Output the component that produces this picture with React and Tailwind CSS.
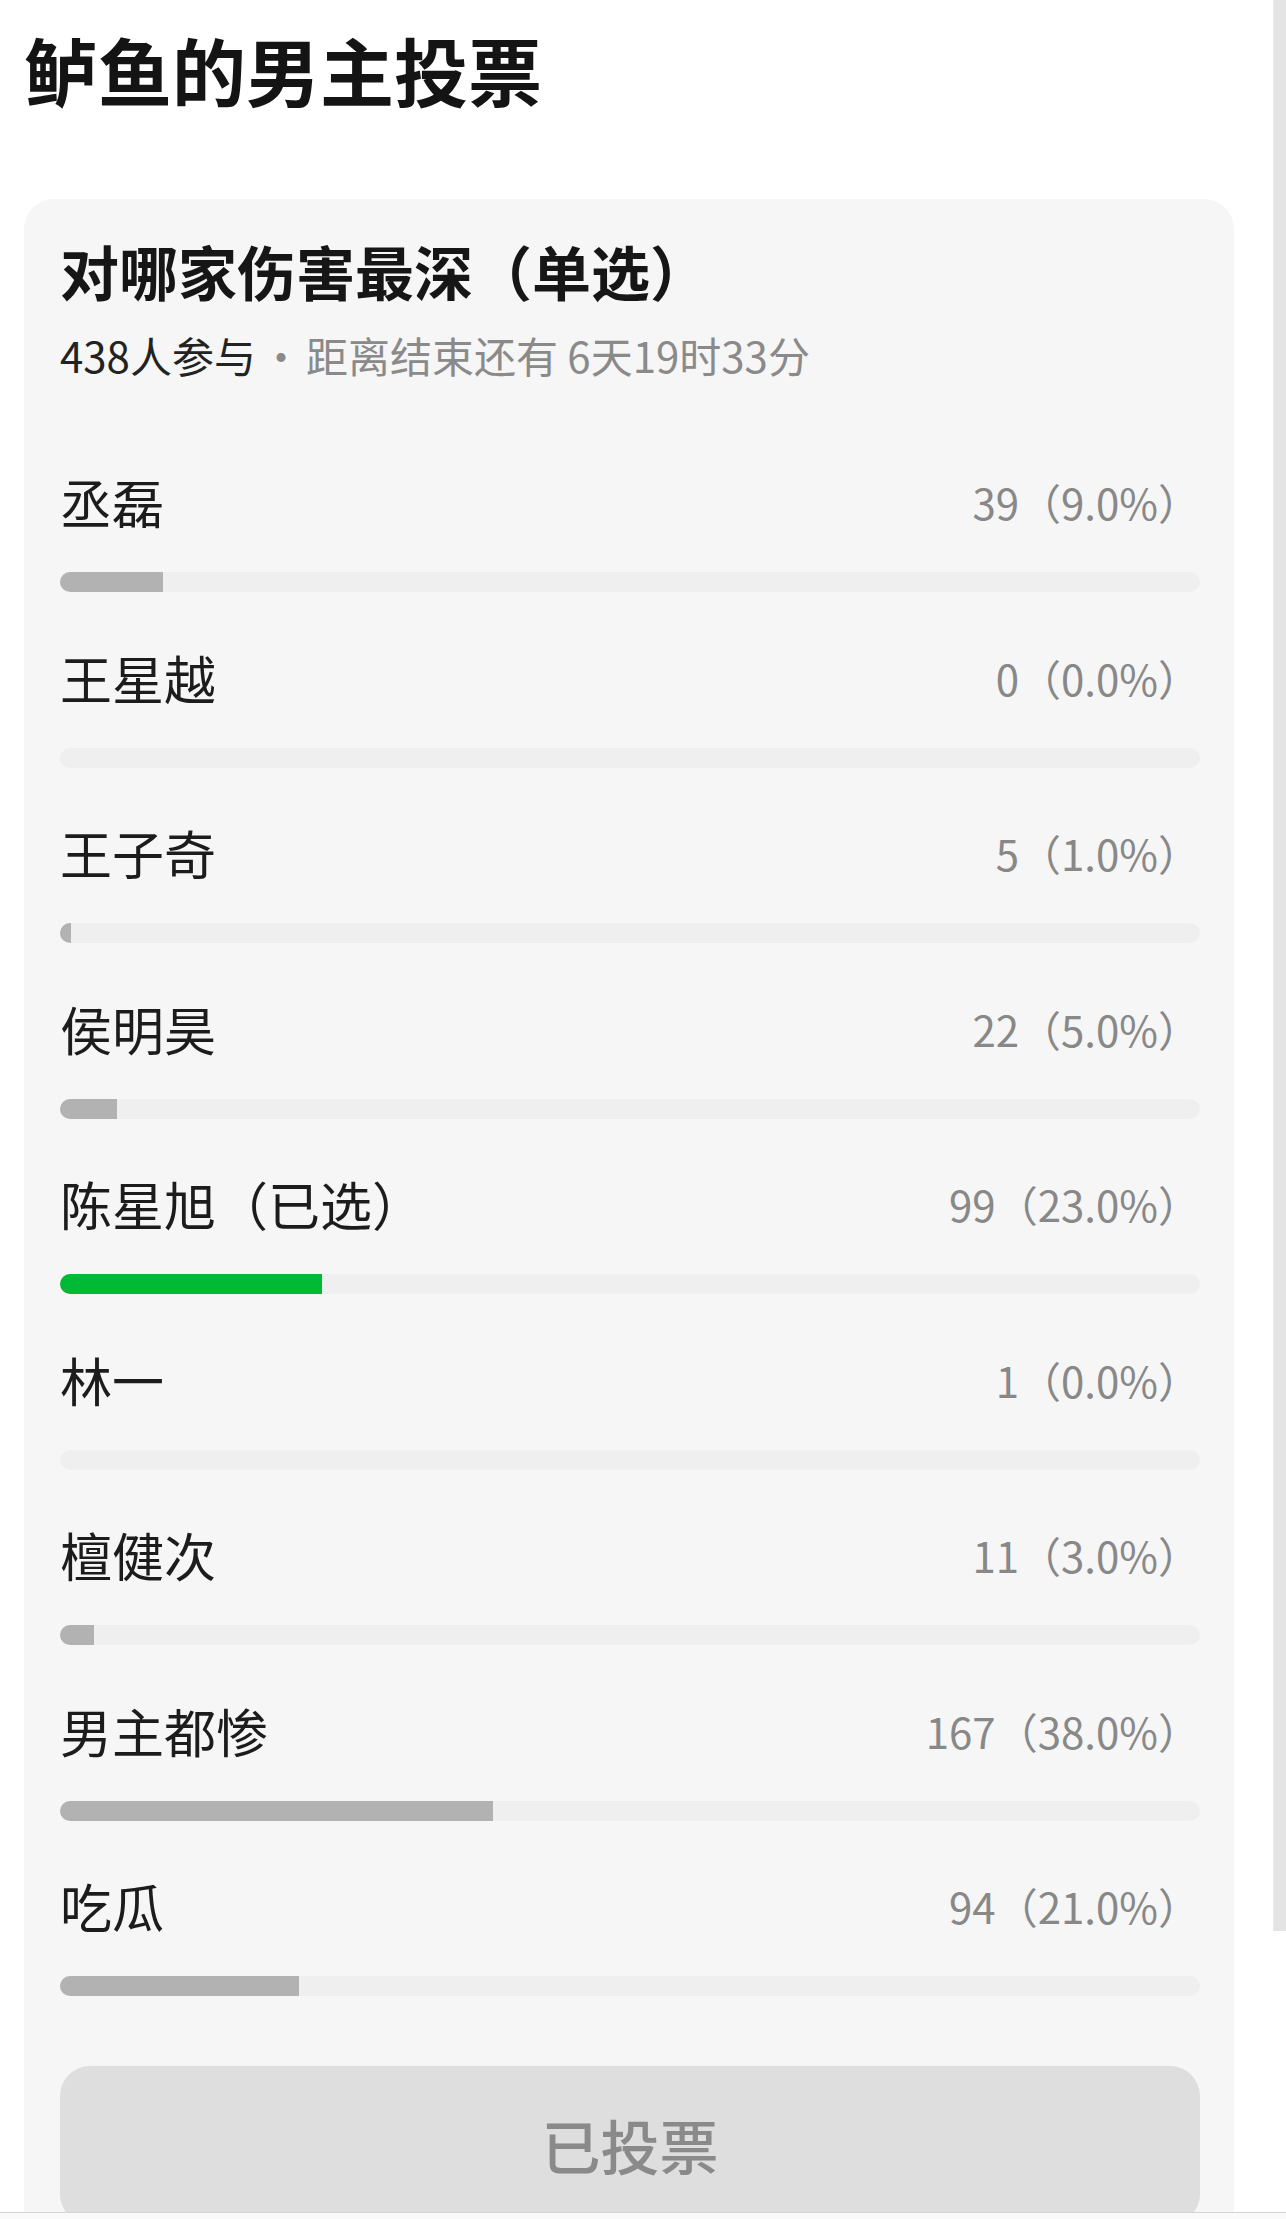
import React from 'react';

const options = [
  { name: '丞磊', votes: 39, pct: 9.0 },
  { name: '王星越', votes: 0, pct: 0.0 },
  { name: '王子奇', votes: 5, pct: 1.0 },
  { name: '侯明昊', votes: 22, pct: 5.0 },
  { name: '陈星旭（已选）', votes: 99, pct: 23.0, picked: true },
  { name: '林一', votes: 1, pct: 0.0 },
  { name: '檀健次', votes: 11, pct: 3.0 },
  { name: '男主都惨', votes: 167, pct: 38.0 },
  { name: '吃瓜', votes: 94, pct: 21.0 },
];

function OptionRow({ option }) {
  return (
    <div>
      <div className="flex items-center justify-between h-[60px]">
        <span className="text-[52px] leading-[60px] text-[#1c1c1c]">{option.name}</span>
        <span className="text-[42px] leading-[60px] text-[#888888]">
          {option.votes}（{option.pct.toFixed(1)}%）
        </span>
      </div>
      {/* 进度条：宽度按百分比 */}
      <div className="mt-[40px] h-[20px] w-full rounded-[10px] bg-[#efefef] overflow-hidden">
        <div
          className={`h-full ${option.picked ? 'bg-[#00b935]' : 'bg-[#b2b2b2]'}`}
          style={{ width: `${option.pct}%` }}
        />
      </div>
    </div>
  );
}

export default function App() {
  return (
    <div className="relative w-[1286px] h-[2219px] overflow-hidden bg-white font-['Noto_Sans_CJK_SC','Noto_Sans',sans-serif]">
      <div className="pl-[24px] pr-[52px] pt-[32px]">
        <h1 className="text-[74px] leading-[74px] font-bold text-[#141414]">鲈鱼的男主投票</h1>

        <div className="mt-[93px] rounded-[30px] bg-[#f6f6f6] pl-[36px] pr-[34px] pt-[41px] pb-[40px]">
          <h2 className="text-[59px] leading-[62px] font-bold text-[#161616]">对哪家伤害最深（单选）</h2>
          <p className="mt-[32px] text-[42px] leading-[42px]">
            <span className="text-[#222222]">438人参与</span>
            <span className="text-[#8a8a8a] mx-[4px]">·</span>
            <span className="text-[#8a8a8a]">距离结束还有 6天19时33分</span>
          </p>

          <div className="mt-[96px] flex flex-col gap-[55.5px]">
            {options.map((o) => (
              <OptionRow key={o.name} option={o} />
            ))}
          </div>

          <button className="mt-[70px] w-full h-[158px] rounded-[30px] bg-[#dedede] text-[59px] font-medium text-[#8a8a8a]">
            已投票
          </button>
        </div>
      </div>

      {/* 右侧滚动条 */}
      <div className="absolute right-0 top-0 w-[13px] h-[1931px] bg-[#e4e4e4] border-l border-[#ececec]" />

      {/* 底部边线 */}
      <div className="absolute left-0 right-0 top-[2212px] h-[7px] bg-[#fafafa] border-t border-[#d4d4d4]" />
    </div>
  );
}
